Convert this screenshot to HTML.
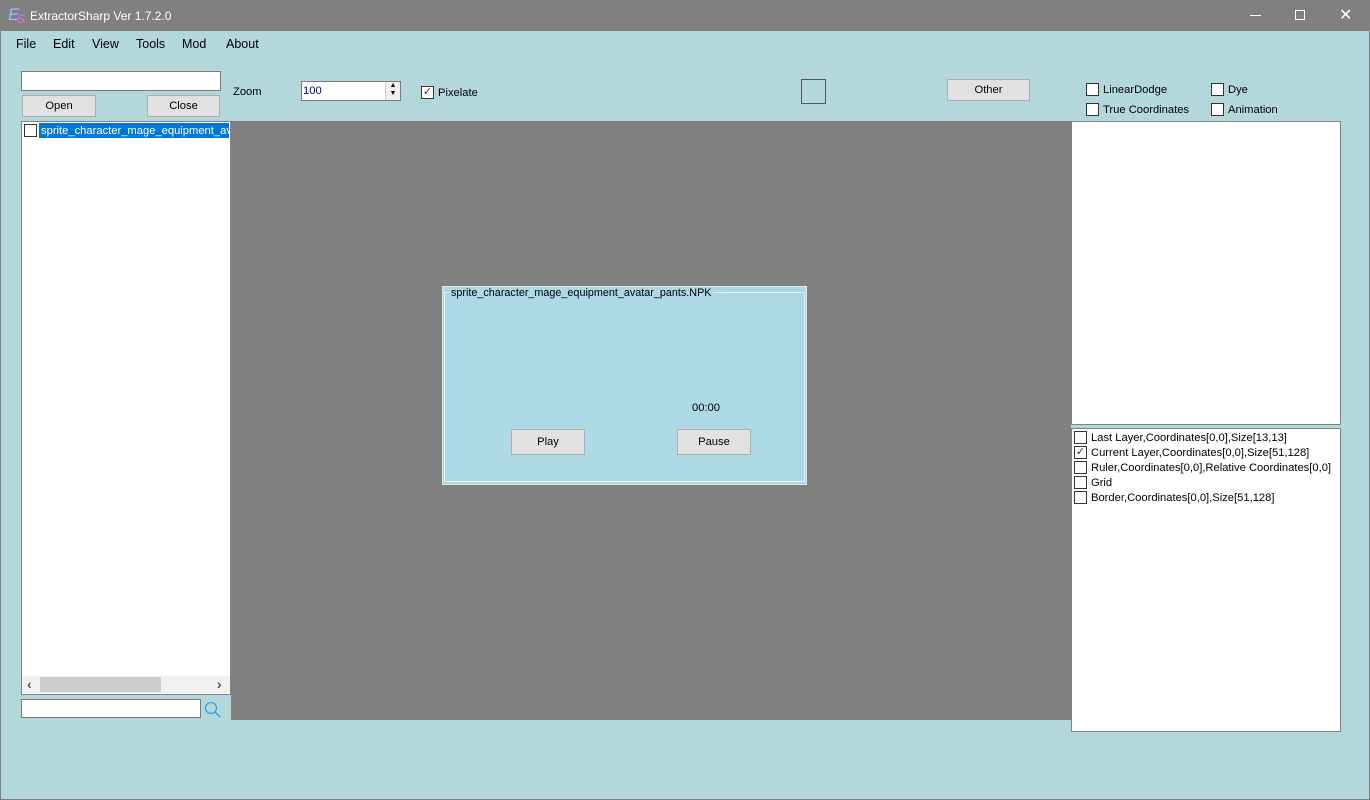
<!DOCTYPE html>
<html><head><style>
*{margin:0;padding:0;box-sizing:border-box}
body{width:1370px;height:800px;overflow:hidden;background:#b4d7dc;font-family:"Liberation Sans",sans-serif;font-size:11.2px;color:#000;position:relative}
.a{position:absolute}
.btn{position:absolute;background:#e1e1e1;border:1px solid #adadad;text-align:center;line-height:21px;font-size:11.2px}
.cb{position:absolute;width:13px;height:13px;border:1px solid #333;background:#fff}
.t{position:absolute;white-space:nowrap;font-size:11.2px;margin-top:1px}
</style></head><body>
<div class="a" style="left:0;top:0;width:1370px;height:800px;border:1px solid #808080"></div>
<div class="a" style="left:0;top:0;width:1370px;height:31px;background:#808080"></div>
<div class="t" style="left:8px;top:4px;font-size:17px;font-style:italic;color:#a0b8ff">E</div>
<div class="t" style="left:17px;top:11px;font-size:12px;font-style:italic;color:#e070e0">S</div>
<div class="t" style="left:30px;top:8px;color:#fff;font-size:12px">ExtractorSharp Ver 1.7.2.0</div>
<div class="a" style="left:1250px;top:15px;width:11px;height:1px;background:#fff"></div>
<div class="a" style="left:1295px;top:10px;width:10px;height:10px;border:1px solid #fff"></div>
<div class="t" style="left:1339px;top:4px;color:#fff;font-size:16px">&#10005;</div>
<div class="t" style="left:16px;top:36px;font-size:12.5px">File</div>
<div class="t" style="left:53px;top:36px;font-size:12.5px">Edit</div>
<div class="t" style="left:92px;top:36px;font-size:12.5px">View</div>
<div class="t" style="left:136px;top:36px;font-size:12.5px">Tools</div>
<div class="t" style="left:182px;top:36px;font-size:12.5px">Mod</div>
<div class="t" style="left:226px;top:36px;font-size:12.5px">About</div>
<div class="a" style="left:21px;top:71px;width:200px;height:20px;background:#fff;border:1px solid #7a7a7a"></div>
<div class="btn" style="left:22px;top:95px;width:74px;height:22px">Open</div>
<div class="btn" style="left:147px;top:95px;width:73px;height:22px">Close</div>
<div class="t" style="left:233px;top:85px">Zoom</div>
<div class="a" style="left:301px;top:81px;width:100px;height:20px;background:#fff;border:1px solid #7a7a7a"></div>
<div class="t" style="left:303px;top:84px;color:#000080">100</div>
<div class="a" style="left:385px;top:82px;width:15px;height:18px;background:#f0f0f0;border-left:1px solid #ccc;font-size:7px;line-height:8px;text-align:center">&#9650;<br>&#9660;</div>
<div class="cb" style="left:421px;top:86px;font-size:11px;line-height:11px;text-align:center;color:#333">&#10003;</div>
<div class="t" style="left:438px;top:86px">Pixelate</div>
<div class="a" style="left:801px;top:79px;width:25px;height:25px;border:1px solid #555"></div>
<div class="btn" style="left:947px;top:79px;width:83px;height:22px">Other</div>
<div class="cb" style="left:1086px;top:83px"></div><div class="t" style="left:1103px;top:83px">LinearDodge</div>
<div class="cb" style="left:1211px;top:83px"></div><div class="t" style="left:1228px;top:83px">Dye</div>
<div class="cb" style="left:1086px;top:103px"></div><div class="t" style="left:1103px;top:103px">True Coordinates</div>
<div class="cb" style="left:1211px;top:103px"></div><div class="t" style="left:1228px;top:103px">Animation</div>
<div class="a" style="left:21px;top:121px;width:210px;height:574px;background:#fff;border:1px solid #828282"></div>
<div class="cb" style="left:24px;top:124px"></div>
<div class="a" style="left:39px;top:123px;width:190px;height:15px;background:#0078d7;color:#fff;padding-left:2px;white-space:nowrap;overflow:hidden;line-height:16px">sprite_character_mage_equipment_avatar_pants.NPK</div>
<div class="a" style="left:22px;top:676px;width:208px;height:17px;background:#f0f0f0"></div>
<div class="a" style="left:40px;top:677px;width:121px;height:15px;background:#cdcdcd"></div>
<div class="t" style="left:27px;top:675px;color:#555;font-size:14px;font-weight:bold">&#8249;</div>
<div class="t" style="left:217px;top:675px;color:#555;font-size:14px;font-weight:bold">&#8250;</div>
<div class="a" style="left:21px;top:699px;width:180px;height:19px;background:#fff;border:1px solid #7a7a7a"></div>
<svg class="a" style="left:204px;top:701px" width="18" height="18"><circle cx="7" cy="7" r="5.5" fill="none" stroke="#3a9ee0" stroke-width="1.3"/><line x1="11" y1="11" x2="16" y2="16" stroke="#3a9ee0" stroke-width="1.5"/></svg>
<div class="a" style="left:231px;top:121px;width:840px;height:599px;background:#808080"></div>
<div class="a" style="left:442px;top:286px;width:365px;height:199px;background:#add8e6;border:1px solid #e0e8ec"></div>
<div class="a" style="left:444px;top:292px;width:361px;height:190px;border:1px solid #e8f0f2"></div>
<div class="t" style="left:449px;top:286px;background:#add8e6;padding:0 2px;font-size:10.8px">sprite_character_mage_equipment_avatar_pants.NPK</div>
<div class="t" style="left:692px;top:401px">00:00</div>
<div class="btn" style="left:511px;top:429px;width:74px;height:26px;line-height:25px">Play</div>
<div class="btn" style="left:677px;top:429px;width:74px;height:26px;line-height:25px">Pause</div>
<div class="a" style="left:1071px;top:121px;width:270px;height:304px;background:#fff;border:1px solid #828282"></div>
<div class="a" style="left:1071px;top:428px;width:270px;height:304px;background:#fff;border:1px solid #828282"></div>
<div class="cb" style="left:1074px;top:431px"></div><div class="t" style="left:1091px;top:431px">Last Layer,Coordinates[0,0],Size[13,13]</div>
<div class="cb" style="left:1074px;top:446px;font-size:11px;line-height:11px;text-align:center;color:#333">&#10003;</div><div class="t" style="left:1091px;top:446px">Current Layer,Coordinates[0,0],Size[51,128]</div>
<div class="cb" style="left:1074px;top:461px"></div><div class="t" style="left:1091px;top:461px">Ruler,Coordinates[0,0],Relative Coordinates[0,0]</div>
<div class="cb" style="left:1074px;top:476px"></div><div class="t" style="left:1091px;top:476px">Grid</div>
<div class="cb" style="left:1074px;top:491px"></div><div class="t" style="left:1091px;top:491px">Border,Coordinates[0,0],Size[51,128]</div>
</body></html>
